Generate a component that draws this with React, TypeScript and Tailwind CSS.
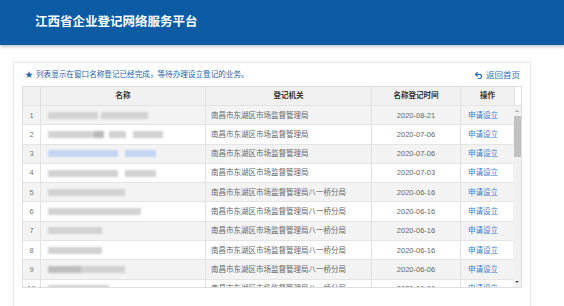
import { Undo2 } from "lucide-react";

type Block = [number, number, string?];

const rows: { org: string; date: string; name: Block[] }[] = [
  { org: "南昌市东湖区市场监督管理局", date: "2020-08-21", name: [[7, 50], [3, 47]] },
  { org: "南昌市东湖区市场监督管理局", date: "2020-07-06", name: [[7, 46], [0, 10, "#b8b8b8"], [5, 17], [7, 30]] },
  { org: "南昌市东湖区市场监督管理局", date: "2020-07-06", name: [[7, 70, "#c3d4f3"], [7, 31, "#c3d4f3"]] },
  { org: "南昌市东湖区市场监督管理局", date: "2020-07-03", name: [[7, 70], [7, 31]] },
  { org: "南昌市东湖区市场监督管理局八一桥分局", date: "2020-06-16", name: [[7, 77]] },
  { org: "南昌市东湖区市场监督管理局八一桥分局", date: "2020-06-16", name: [[7, 93]] },
  { org: "南昌市东湖区市场监督管理局八一桥分局", date: "2020-06-16", name: [[7, 54]] },
  { org: "南昌市东湖区市场监督管理局八一桥分局", date: "2020-06-16", name: [[7, 54]] },
  { org: "南昌市东湖区市场监督管理局八一桥分局", date: "2020-06-06", name: [[7, 33, "#bdbdbd"], [0, 44]] },
  { org: "南昌市东湖区市场监督管理局八一桥分局", date: "2020-06-06", name: [[7, 61]] },
];

const cols = "grid grid-cols-[18px_165px_166px_89px_53px]";

export default function App() {
  return (
    <div
      className="w-[564px] h-[306px] overflow-hidden bg-white"
      style={{ fontFamily: '"Liberation Sans", "Noto Sans CJK SC", sans-serif' }}
    >
      <header className="relative z-10 h-[45px] bg-[#0b5ca5] px-[35px] flex items-center shadow-[0_2px_3px_rgba(0,0,0,0.22)]">
        <h1 className="text-white text-[12.5px] font-bold">江西省企业登记网络服务平台</h1>
      </header>

      <div className="ml-[13px] mt-[17px] w-[518px] h-[260px] border border-[#ececec] shadow-[0_0_3px_rgba(0,0,0,0.06)] px-[8px]">
        <div className="h-[23px] flex items-center justify-between pt-[1px]">
          <p className="flex items-center text-[7.6px] text-[#1e5fa8] pl-[3px]">
            <span className="text-[8px] mr-[3px]">★</span>
            列表显示在窗口名称登记已经完成，等待办理设立登记的业务。
          </p>
          <a className="flex items-center text-[8.5px] text-[#2f6db5] pr-[2px]">
            <Undo2 size={9} strokeWidth={3} className="mr-[3px]" />
            返回首页
          </a>
        </div>

        <div className="w-[500px] border border-[#dedede] text-[7.5px]">
          <div className="flex h-[19px] border-b border-[#e2e2e2]">
            <div className={`${cols} bg-[#f1f1f1] text-[#333] font-semibold`}>
              <div className="border-r border-[#e2e2e2]" />
              <div className="border-r border-[#e2e2e2] flex items-center justify-center">名称</div>
              <div className="border-r border-[#e2e2e2] flex items-center justify-center">登记机关</div>
              <div className="border-r border-[#e2e2e2] flex items-center justify-center">名称登记时间</div>
              <div className="flex items-center justify-center">操作</div>
            </div>
            <div className="w-[7px] bg-white border-l border-[#e2e2e2]" />
          </div>

          <div className="flex">
            <div className="h-[181px] overflow-hidden">
              {rows.map((r, i) => (
                <div
                  key={i}
                  className={`${cols} h-[19.3px] border-b border-[#e4e4e4] ${i % 2 === 0 ? "bg-[#f3f3f3]" : "bg-white"}`}
                >
                  <div className="border-r border-[#e2e2e2] flex items-center justify-center text-[#777]">{i + 1}</div>
                  <div className="border-r border-[#e2e2e2] flex items-center overflow-hidden">
                    <div className="flex items-center blur-[1.2px]">
                      {r.name.map(([ml, w, c], j) => (
                        <div
                          key={j}
                          className="h-[7px]"
                          style={{ marginLeft: ml, width: w, background: c ?? "#d2d2d2" }}
                        />
                      ))}
                    </div>
                  </div>
                  <div className="border-r border-[#e2e2e2] flex items-center pl-[5px] text-[#666] whitespace-nowrap">{r.org}</div>
                  <div className="border-r border-[#e2e2e2] flex items-center justify-center text-[#666]">{r.date}</div>
                  <div className="flex items-center pl-[7px] text-[#2f7ad0]">申请设立</div>
                </div>
              ))}
            </div>
            <div className="w-[8px] h-[181px] bg-[#f1f1f1] flex flex-col items-center">
              <div className="h-[10px] flex items-center justify-center">
                <div className="w-0 h-0 border-l-[2px] border-r-[2px] border-b-[2px] border-l-transparent border-r-transparent border-b-[#a3a3a3]" />
              </div>
              <div className="w-[7px] h-[41px] bg-[#c1c1c1]" />
              <div className="flex-1" />
              <div className="h-[10px] flex items-center justify-center">
                <div className="w-0 h-0 border-l-[2px] border-r-[2px] border-t-[2px] border-l-transparent border-r-transparent border-t-[#505050]" />
              </div>
            </div>
          </div>
        </div>
      </div>
    </div>
  );
}
